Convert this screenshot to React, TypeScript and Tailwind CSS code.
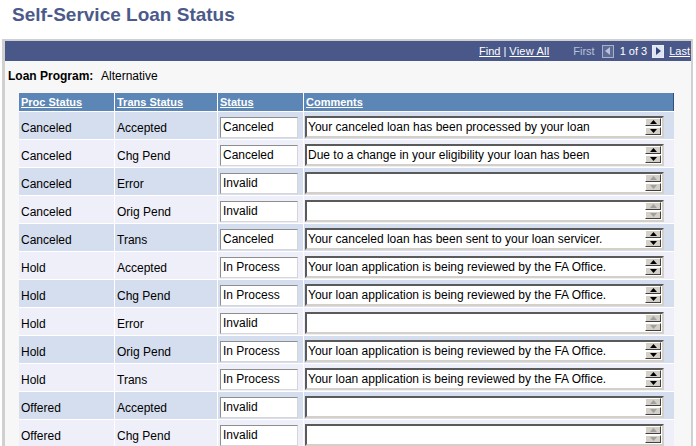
import React from 'react';

type Row = { proc: string; trans: string; status: string; comment: string };

const rows: Row[] = [
  { proc: 'Canceled', trans: 'Accepted', status: 'Canceled', comment: 'Your canceled loan has been processed by your loan' },
  { proc: 'Canceled', trans: 'Chg Pend', status: 'Canceled', comment: 'Due to a change in your eligibility your loan has been' },
  { proc: 'Canceled', trans: 'Error', status: 'Invalid', comment: '' },
  { proc: 'Canceled', trans: 'Orig Pend', status: 'Invalid', comment: '' },
  { proc: 'Canceled', trans: 'Trans', status: 'Canceled', comment: 'Your canceled loan has been sent to your loan servicer.' },
  { proc: 'Hold', trans: 'Accepted', status: 'In Process', comment: 'Your loan application is being reviewed by the FA Office.' },
  { proc: 'Hold', trans: 'Chg Pend', status: 'In Process', comment: 'Your loan application is being reviewed by the FA Office.' },
  { proc: 'Hold', trans: 'Error', status: 'Invalid', comment: '' },
  { proc: 'Hold', trans: 'Orig Pend', status: 'In Process', comment: 'Your loan application is being reviewed by the FA Office.' },
  { proc: 'Hold', trans: 'Trans', status: 'In Process', comment: 'Your loan application is being reviewed by the FA Office.' },
  { proc: 'Offered', trans: 'Accepted', status: 'Invalid', comment: '' },
  { proc: 'Offered', trans: 'Chg Pend', status: 'Invalid', comment: '' },
];

const ScrollBtn = ({ up, enabled }: { up: boolean; enabled: boolean }) => (
  <div className="w-[16px] h-[8px] bg-[#d4d0c8] border-t border-l border-t-white border-l-white border-b border-r border-b-[#404040] border-r-[#404040] flex items-center justify-center">
    <svg width="7" height="4" viewBox="0 0 7 4">
      {up ? (
        <path d="M3.5 0 L7 4 L0 4 Z" fill={enabled ? '#000' : '#a0a0a0'} />
      ) : (
        <path d="M0 0 L7 0 L3.5 4 Z" fill={enabled ? '#000' : '#a0a0a0'} />
      )}
    </svg>
  </div>
);

export default function App() {
  return (
    <div className="w-[696px] h-[446px] overflow-hidden bg-white font-['Liberation_Sans',Arial,sans-serif] text-black">
      <div className="pt-1 pl-[12px] h-[26px]">
        <h1 className="text-[19px] leading-[22px] font-bold text-[#4b5a8b]">Self-Service Loan Status</h1>
      </div>

      <div className="mt-[13px] ml-[2px] w-[691px] h-[420px] border-t-2 border-l-[3px] border-r-2 border-[#d0d0d0] bg-[#f7f7f7]">
        <div className="h-[20px] bg-[#4a5889] flex items-center justify-end pr-[1px] text-[11px] text-white">
          <span className="underline">Find</span>
          <span className="ml-[3px]">|</span>
          <span className="ml-[3px] underline tracking-[0.2px]">View All</span>
          <span className="ml-[24px] text-[#b9c1d9]">First</span>
          <span className="ml-[7px] w-[12px] h-[13px] border border-[#aab2c8] bg-[#5d6b98] flex items-center justify-center">
            <svg width="5" height="8" viewBox="0 0 5 8"><path d="M5 0 L0 4 L5 8 Z" fill="#b9c1d9" /></svg>
          </span>
          <span className="ml-[6px]">1 of 3</span>
          <span className="ml-[5px] w-[12px] h-[13px] border border-[#e8ecf6] bg-[#dde4f2] flex items-center justify-center">
            <svg width="5" height="8" viewBox="0 0 5 8"><path d="M0 0 L5 4 L0 8 Z" fill="#34457a" /></svg>
          </span>
          <span className="ml-[5px] underline">Last</span>
        </div>

        <div className="mt-2 pl-[3px] flex text-[12px] leading-[14px]">
          <span className="font-bold w-[93px]">Loan Program:</span>
          <span>Alternative</span>
        </div>

        <div className="mt-[10px] ml-[14px] w-[655px] grid grid-cols-[95px_102px_85px_370px] gap-px bg-white">
          <div className="h-[18px] bg-[#5b86b6] pl-[2px] text-[11px] leading-[18px] font-bold text-white underline">Proc Status</div>
          <div className="h-[18px] bg-[#5b86b6] pl-[2px] text-[11px] leading-[18px] font-bold text-white underline">Trans Status</div>
          <div className="h-[18px] bg-[#5b86b6] pl-[2px] text-[11px] leading-[18px] font-bold text-white underline">Status</div>
          <div className="h-[18px] bg-[#5b86b6] pl-[2px] text-[11px] leading-[18px] font-bold text-white underline border-r border-[#2f4f7f]">Comments</div>

          {rows.map((r, i) => {
            const bg = i % 2 === 0 ? 'bg-[#d5deef]' : 'bg-[#eeeff8]';
            const enabled = r.comment !== '';
            return (
              <React.Fragment key={i}>
                <div className={`h-[27px] ${bg} pl-[2px] pt-1 flex items-center text-[12px]`}>{r.proc}</div>
                <div className={`h-[27px] ${bg} pl-[2px] pt-1 flex items-center text-[12px]`}>{r.trans}</div>
                <div className={`h-[27px] ${bg} pl-[2px] pt-1 flex items-center`}>
                  <div className="w-[78px] h-[21px] bg-white border border-t-[#8e8e8e] border-l-[#8e8e8e] border-b-[#d6d6d6] border-r-[#d6d6d6] pl-[2px] text-[12px] leading-[19px]">
                    {r.status}
                  </div>
                </div>
                <div className={`h-[27px] ${bg} pl-[1px] pt-[2px] flex items-center`}>
                  <div className="w-[359px] h-[22px] bg-white border-2 border-t-[#5a5a5a] border-l-[#5a5a5a] border-b-[#d4d0c8] border-r-[#d4d0c8] flex items-center">
                    <span className="flex-1 pl-[1px] text-[12px] leading-[18px] whitespace-nowrap overflow-hidden">{r.comment}</span>
                    <div className="flex flex-col gap-px mr-[1px]">
                      <ScrollBtn up enabled={enabled} />
                      <ScrollBtn up={false} enabled={enabled} />
                    </div>
                  </div>
                </div>
              </React.Fragment>
            );
          })}
        </div>
      </div>
    </div>
  );
}
